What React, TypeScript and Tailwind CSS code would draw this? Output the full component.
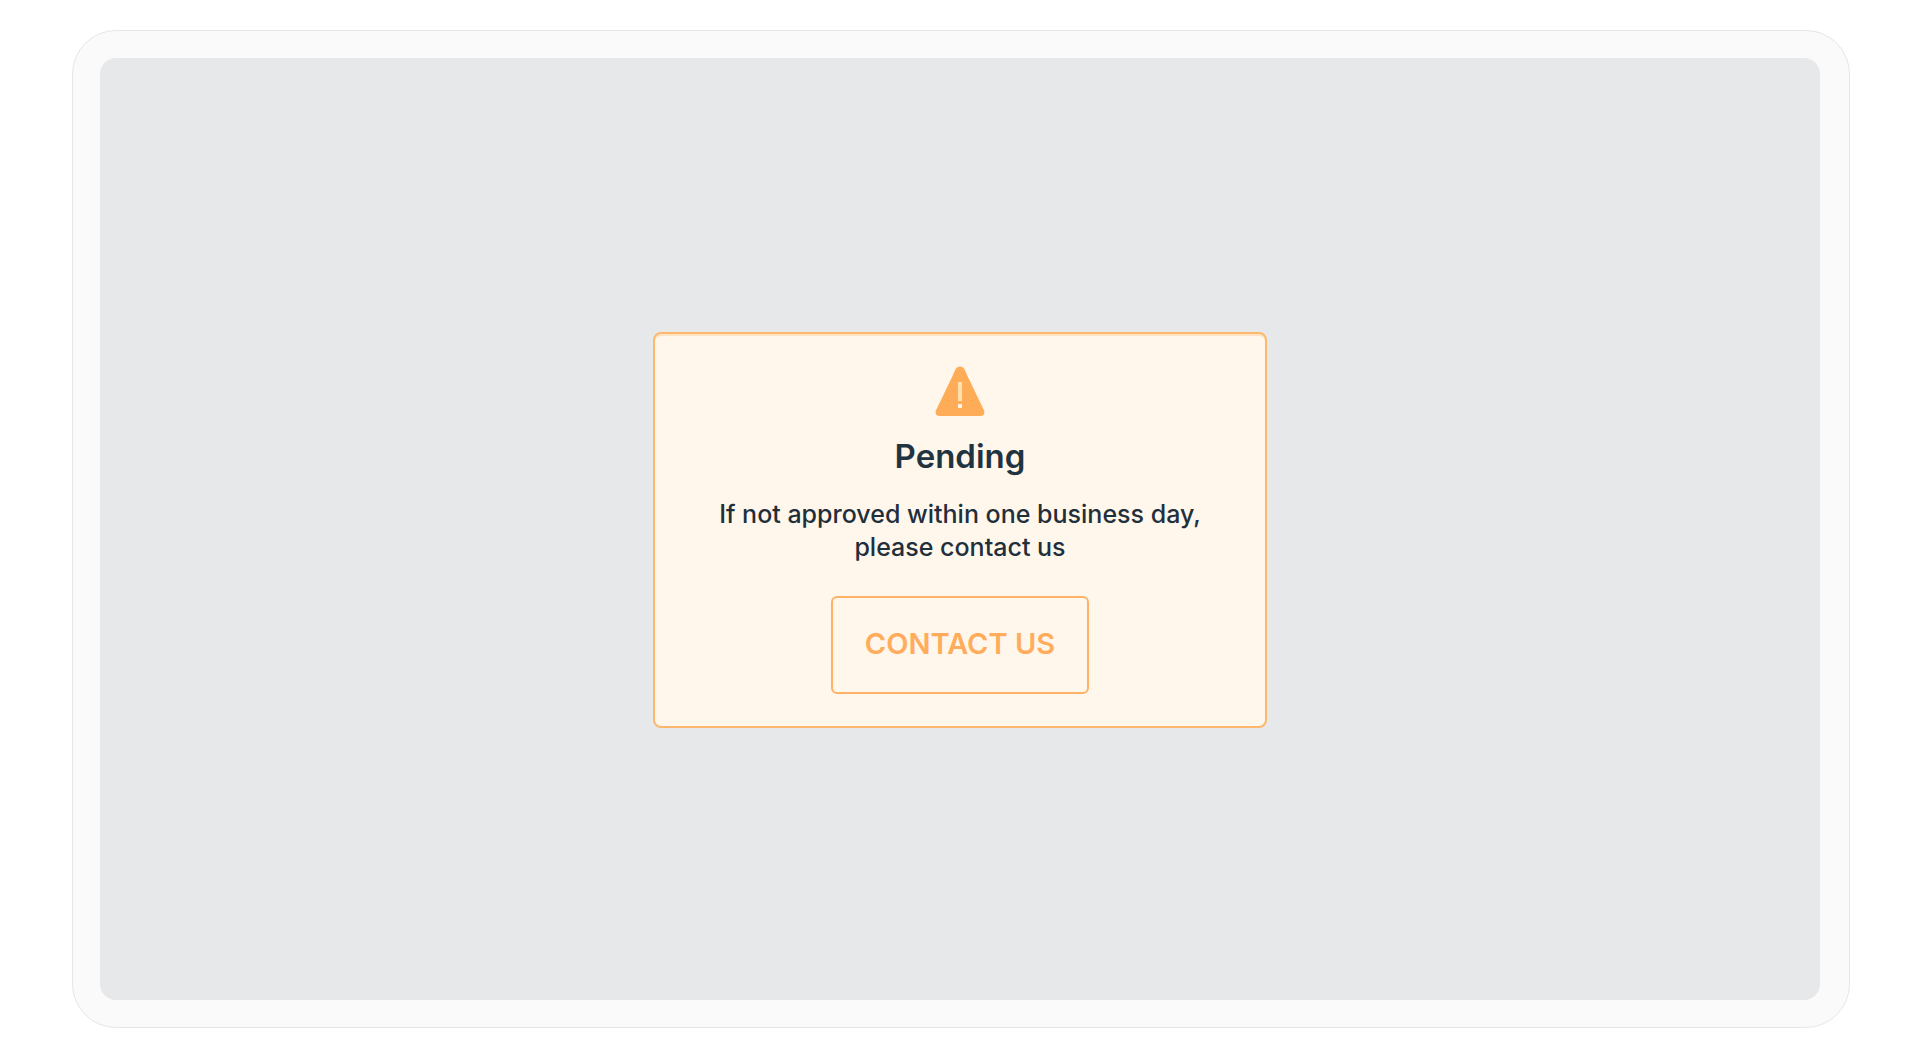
function WarningIcon() {
  return (
    <svg
      className="h-[50px] w-[50px] shrink-0"
      viewBox="0 0 50 50"
      fill="none"
      aria-hidden="true"
    >
      <path
        d="M21 2.6C22.6 -.2 27.4 -.2 29 2.6C30.500 5 31 6.800 32 9L48.600 43.500C50.400 47.200 49 50 45.500 50H4.500C1 50 -.4 47.200 1.400 43.500L18 9C19 6.800 19.500 5 21 2.600Z"
        fill="#ffac58"
      />
      <rect x="23" y="16" width="4" height="19" fill="#ffe1ae" />
      <rect x="23" y="38" width="4" height="4" fill="#fff3e6" />
    </svg>
  );
}

function PendingCard() {
  return (
    <section
      aria-labelledby="status-title"
      className="flex w-full max-w-[614px] flex-col items-center rounded-lg border-2 border-[#ffb76e] bg-[#fff7ec] px-8 pt-8 pb-8 text-center shadow-[inset_0_2px_0_#ffe3c2]"
    >
      <WarningIcon />
      <h1
        id="status-title"
        className="mt-[18px] text-[33px] leading-[44px] font-semibold text-[#1f3440]"
      >
        Pending
      </h1>
      <p className="mt-5 text-[25px] leading-[33px] font-medium text-[#1f2f3c]">
        If not approved within one business day,
        <br />
        please contact us
      </p>
      <button
        type="button"
        className="mt-8 cursor-pointer rounded-md border-2 border-[#ffb266] px-8 pt-7 pb-[30px] text-[29px] leading-9 font-semibold whitespace-nowrap text-[#ffac5c]"
      >
        CONTACT US
      </button>
    </section>
  );
}

export default function App() {
  return (
    <div className="flex min-h-screen bg-white py-[30px] pr-[70px] pl-[72px] font-['Inter',sans-serif]">
      <div className="flex flex-1 rounded-[44px] border border-[#e6e6e6] bg-[#fafafa] p-[27px] pr-[29px]">
        <main className="flex flex-1 items-center justify-center rounded-2xl bg-[#e6e8ea] pt-0.5">
          <PendingCard />
        </main>
      </div>
    </div>
  );
}
